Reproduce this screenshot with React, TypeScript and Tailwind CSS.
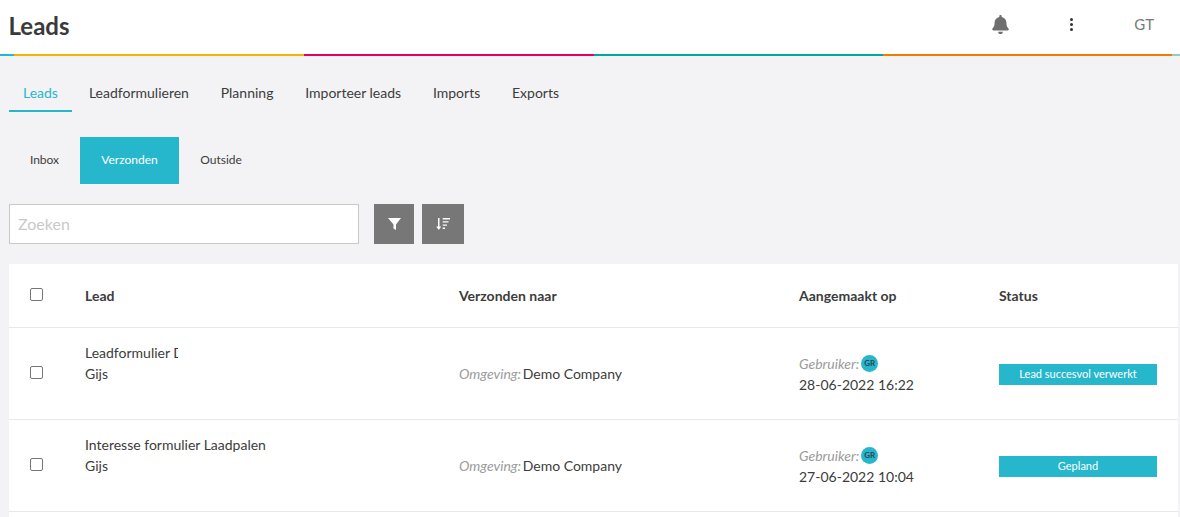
const TABS = ["Leads", "Leadformulieren", "Planning", "Importeer leads", "Imports", "Exports"]
const SUB_TABS = ["Inbox", "Verzonden", "Outside"]

const ROWS = [
  { title: "Leadformulier D", clip: true, date: "28-06-2022 16:22", status: "Lead succesvol verwerkt" },
  { title: "Interesse formulier Laadpalen", clip: false, date: "27-06-2022 10:04", status: "Gepland" },
]

const GRID = "grid grid-cols-[76px_374px_340px_200px_1fr] items-center"

function Checkbox() {
  return <span className="mb-[2px] ml-[21px] block h-[13px] w-[13px] rounded-[2px] border border-[#767676] bg-white" />
}

function Bell() {
  return (
    <svg viewBox="0 0 448 512" className="h-[19px] w-[17px] fill-[#6e6e6e]">
      <path d="M224 512c35.3 0 64-28.700 64-64H160c0 35.300 28.700 64 64 64zm215.400-149.700c-19.300-20.800-55.500-52-55.500-154.300 0-77.700-54.500-139.900-127.900-155.200V32c0-17.700-14.300-32-32-32s-32 14.300-32 32v20.800C118.600 68.100 64.100 130.300 64.100 208c0 102.300-36.200 133.500-55.500 154.300-6 6.400-8.700 14.100-8.600 21.700.1 16.400 13 32 32.100 32h383.800c19.100 0 32-15.600 32.100-32 .1-7.600-2.600-15.300-8.600-21.700z" />
    </svg>
  )
}

export default function App() {
  return (
    <div className="flex h-[517px] flex-col overflow-hidden bg-[#f3f3f6] font-['Lato','Liberation_Sans',sans-serif] text-[#3c3c3c]">
      <header className="flex h-[54px] shrink-0 items-center bg-white pl-[8.500px]">
        <h1 className="mb-[2px] text-[24px] font-bold leading-none text-[#3a3a3a]">Leads</h1>
        <div className="ml-auto flex items-center pb-[6px]">
          <Bell />
          <span className="ml-[61px] flex flex-col gap-[2px]">
            <i className="block h-[3px] w-[3px] rounded-full bg-[#333]" />
            <i className="block h-[3px] w-[3px] rounded-full bg-[#333]" />
            <i className="block h-[3px] w-[3px] rounded-full bg-[#333]" />
          </span>
          <span className="ml-[61px] mr-[26px] text-[15px] text-[#777]">GT</span>
        </div>
      </header>
      <div className="flex h-[2px] shrink-0">
        <div className="w-[14px] bg-[#26b7cd]" />
        <div className="w-[290px] bg-[#f5b400]" />
        <div className="w-[290px] bg-[#e5005f]" />
        <div className="w-[289px] bg-[#00a89c]" />
        <div className="w-[289px] bg-[#ef7d00]" />
        <div className="flex-1 bg-[#8fd0bd]" />
      </div>

      <nav className="flex h-[56px] shrink-0 items-end pl-[9px] text-[14px]">
        {TABS.map((tab, i) => (
          <span
            key={tab}
            className={
              i === 0
                ? "mr-[17px] flex h-[30px] items-start border-b-2 border-[#26b7cd] px-[14px] text-[#26b7cd]"
                : "mr-[31.800px] mb-[2px] flex h-[28px] items-start"
            }
          >
            {tab}
          </span>
        ))}
      </nav>

      <div className="mt-[25px] flex shrink-0 pl-[9px] text-[12px]">
        {SUB_TABS.map((tab) => (
          <span
            key={tab}
            className={
              tab === "Verzonden"
                ? "flex h-[47px] w-[99px] items-center justify-center bg-[#26b7cd] pb-[2px] text-white"
                : tab === "Inbox"
                  ? "flex h-[47px] w-[71px] items-center justify-center pb-[2px]"
                  : "flex h-[47px] w-[84px] items-center justify-center pb-[2px]"
            }
          >
            {tab}
          </span>
        ))}
      </div>

      <div className="mt-[20px] flex shrink-0 pl-[9px]">
        <div className="flex h-10 w-[350px] items-center border border-[#c8c8c8] bg-white pl-2 text-[16px] text-[#c9c9c9]">
          Zoeken
        </div>
        <button className="ml-[15px] flex h-10 w-10 items-center justify-center bg-[#777]">
          <svg viewBox="0 0 13 12" className="h-3 w-[13px] fill-white">
            <path d="M0 0h13L8 6.500V12L5.500 10.500V6.500z" />
          </svg>
        </button>
        <button className="ml-2 flex h-10 w-[42px] items-center justify-center bg-[#777]">
          <svg viewBox="0 0 14 12" className="h-3 w-[14px] fill-white">
            <path d="M2 0h1.500v8.500H5.300L2.750 12 .2 8.500H2z" />
            <path d="M6.700 0H14v1.400H6.700zM6.700 3.200h5.800v1.400H6.700zM6.700 6.400h4.200v1.400H6.700zM6.700 9.600h2.300V11H6.700z" />
          </svg>
        </button>
      </div>

      <div className="ml-[9px] mr-[2px] mt-5 flex-1 bg-white text-[14px]">
        <div className={`${GRID} h-[64px] border-b border-[#e8e8e8] font-bold`}>
          <Checkbox />
          <span>Lead</span>
          <span>Verzonden naar</span>
          <span>Aangemaakt op</span>
          <span>Status</span>
        </div>
        {ROWS.map((row) => (
          <div key={row.date} className={`${GRID} h-[92px] border-b border-[#e8e8e8]`}>
            <Checkbox />
            <div className="pb-[21px] leading-[21px]">
              <div className={row.clip ? "w-[93px] overflow-hidden whitespace-nowrap" : ""}>{row.title}</div>
              <div>Gijs</div>
            </div>
            <div>
              <em className="mr-[-2px] text-[#9b9b9b]">Omgeving:</em> Demo Company
            </div>
            <div className="leading-[21px]">
              <div className="flex items-center">
                <em className="text-[#9b9b9b]">Gebruiker:</em>
                <span className="ml-[2px] flex h-[17px] w-[17px] items-center justify-center rounded-full bg-[#26b7cd] text-[8px] font-bold text-[#2f4550]">
                  GR
                </span>
              </div>
              <div>{row.date}</div>
            </div>
            <div className="mt-[1px] flex h-[21px] w-[158px] items-center justify-center bg-[#26b7cd] text-[11px] text-white">
              {row.status}
            </div>
          </div>
        ))}
      </div>
    </div>
  )
}
